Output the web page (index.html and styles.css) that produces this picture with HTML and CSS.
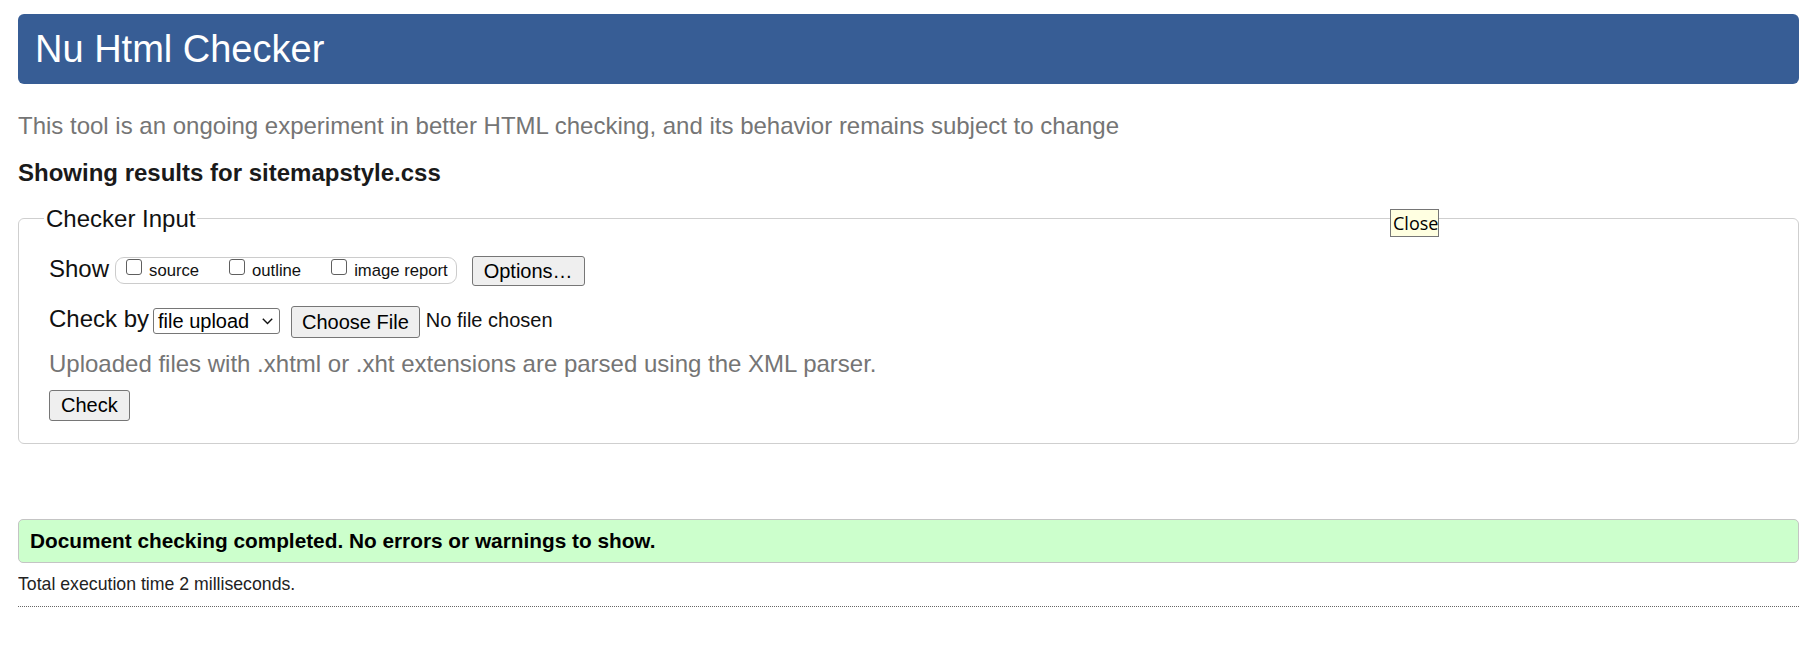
FILE: index.html
```html
<!DOCTYPE html>
<html lang="en">
<head>
<meta charset="utf-8">
<title>Showing results for sitemapstyle.css - Nu Html Checker</title>
<link rel="stylesheet" href="styles.css">
</head>
<body>
<h1 class="header">Nu Html Checker</h1>
<p class="subtitle">This tool is an ongoing experiment in better HTML checking, and its behavior remains subject to change</p>
<p class="results-for">Showing results for sitemapstyle.css</p>

<fieldset class="checker-input">
  <legend class="checker-legend">Checker Input</legend>
  <div class="row row-show">
    <span class="row-label">Show</span>
    <div class="show-group">
      <label class="show-option"><input type="checkbox" class="box"><span class="opt-text">source</span></label>
      <label class="show-option"><input type="checkbox" class="box"><span class="opt-text">outline</span></label>
      <label class="show-option"><input type="checkbox" class="box"><span class="opt-text">image report</span></label>
    </div>
    <button class="btn btn-options" type="button">Options…</button>
  </div>
  <div class="row row-check">
    <span class="row-label">Check by</span>
    <span class="select">
      <span class="select-text">file upload</span>
      <svg class="chevron" width="11" height="7" viewBox="0 0 11 7"><path d="M0.8 0.8 L5.5 5.6 L10.2 0.8" fill="none" stroke="#111" stroke-width="1.4"/></svg>
    </span>
    <button class="btn btn-file" type="button">Choose File</button>
    <span class="no-file">No file chosen</span>
  </div>
  <p class="hint">Uploaded files with .xhtml or .xht extensions are parsed using the XML parser.</p>
  <div class="row row-submit">
    <button class="btn btn-check" type="submit">Check</button>
  </div>
</fieldset>

<div class="success">Document checking completed. No errors or warnings to show.</div>
<p class="exec-time">Total execution time 2 milliseconds.</p>
<hr class="dotted">

<div class="tooltip">Close</div>
</body>
</html>
```

FILE: styles.css
```css
html {
  background: #ffffff;
}

body {
  margin: 14px 17px 0 18px;
  font-family: "Liberation Sans", Arial, Helvetica, sans-serif;
  color: #222222;
  font-size: 24px;
}

.header {
  margin: 0;
  height: 70px;
  line-height: 70px;
  padding-left: 17px;
  background: #375d95;
  color: #ffffff;
  font-size: 38px;
  font-weight: normal;
  border-radius: 6px;
}

.subtitle {
  margin: 28px 0 0;
  font-size: 24px;
  line-height: 28px;
  color: #757575;
}

.results-for {
  margin: 19px 0 0;
  font-size: 24px;
  line-height: 28px;
  font-weight: bold;
  color: #1a1a1a;
}

.checker-input {
  margin: 17px 0 0;
  padding: 22px 0 22px 30px;
  border: 1px solid #cfcfcf;
  border-radius: 6px;
  min-width: 0;
}

.checker-legend {
  margin-left: -5px;
  padding: 0 2px;
  font-size: 24px;
  line-height: 29px;
  color: #111111;
}

.row {
  display: flex;
  align-items: flex-start;
}

.row-label {
  font-size: 24px;
  line-height: 28px;
  color: #111111;
}

.row-check {
  margin-top: 19px;
}

.show-group {
  display: flex;
  align-items: flex-start;
  gap: 30px;
  box-sizing: border-box;
  height: 27px;
  margin: 2px 0 0 6px;
  padding: 0 8px 0 10px;
  border: 1px solid #cccccc;
  border-radius: 9px;
}

.show-option {
  display: flex;
  align-items: flex-start;
}

.box {
  appearance: none;
  -webkit-appearance: none;
  box-sizing: border-box;
  width: 16px;
  height: 16px;
  margin: 1px 7px 0 0;
  border: 1px solid #5f5f5f;
  border-radius: 3px;
  background: #ffffff;
}

.opt-text {
  display: block;
  margin-top: 3px;
  font-size: 16.67px;
  line-height: 20px;
  color: #111111;
}

.btn {
  box-sizing: border-box;
  margin: 0;
  font-family: "Liberation Sans", Arial, Helvetica, sans-serif;
  font-size: 20px;
  line-height: 24px;
  color: #000000;
  background: #efefef;
  border: 1px solid #767676;
  border-radius: 3px;
}

.btn-options {
  height: 30px;
  margin: 1px 0 0 15px;
  padding: 2px 11px;
}

.select {
  display: flex;
  align-items: center;
  justify-content: space-between;
  box-sizing: border-box;
  width: 127px;
  height: 26px;
  margin: 3px 0 0 4px;
  padding: 0 6px 0 4px;
  border: 1px solid #767676;
  border-radius: 3px;
  background: #ffffff;
}

.select-text {
  font-size: 20px;
  line-height: 24px;
  color: #000000;
}

.chevron {
  display: block;
  flex: none;
}

.btn-file {
  height: 32px;
  margin: 1px 0 0 11px;
  padding: 3px 10px;
}

.no-file {
  margin: 3px 0 0 6px;
  font-size: 20px;
  line-height: 24px;
  color: #111111;
}

.hint {
  margin: 12px 0 0;
  font-size: 24px;
  line-height: 28px;
  color: #757575;
}

.row-submit {
  margin-top: 12px;
}

.btn-check {
  height: 31px;
  padding: 2px 11px 3px;
}

.success {
  margin-top: 75px;
  box-sizing: border-box;
  height: 44px;
  padding: 9px 11px;
  font-size: 20.8px;
  line-height: 24px;
  font-weight: bold;
  color: #000000;
  background: #ccffcc;
  border: 1px solid #c4c4c4;
  border-radius: 5px;
}

.exec-time {
  margin: 11px 0 0;
  font-size: 17.7px;
  line-height: 20px;
  color: #222222;
}

.dotted {
  margin: 12px 0 0;
  height: 0;
  border: 0;
  border-top: 1px dotted #666666;
}

.tooltip {
  position: absolute;
  left: 1390px;
  top: 209px;
  box-sizing: border-box;
  width: 49px;
  height: 28px;
  padding: 0 0 0 2px;
  font-family: "Open Sans", "Noto Sans", sans-serif;
  font-size: 18px;
  line-height: 26px;
  color: #000000;
  background: #ffffe1;
  border: 1px solid #767676;
}
```
